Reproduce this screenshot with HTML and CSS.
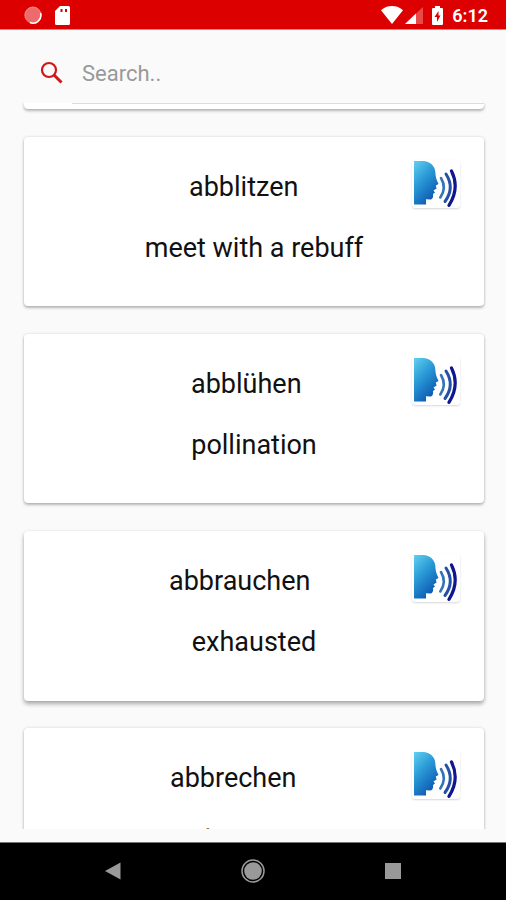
FILE: index.html
```html
<!DOCTYPE html>
<html lang="en">
<head>
    <meta charset="UTF-8">
    <meta name="viewport" content="width=device-width, initial-scale=1.0">
    <title>Dictionary</title>
    <link rel="stylesheet" href="styles.css">
</head>
<body>
    <svg class="defs" width="0" height="0">
        <defs>
            <linearGradient id="face" x1="0" y1="0" x2="0.6" y2="1">
                <stop offset="0" stop-color="#62d0ee"/>
                <stop offset="0.45" stop-color="#2b9bd8"/>
                <stop offset="1" stop-color="#0b57b0"/>
            </linearGradient>
            <symbol id="speak" viewBox="0 0 48 48">
                <path d="M2 1H11C18 1 23 6 23.300 12C23.500 16 24 19 26.500 24L23.800 25.600L24.600 28.600L21.500 30.500L23 32.500L21 34C21.500 38 20 39.600 18 39.500L14 39.200V44.500H2Z" fill="url(#face)"/>
                <g fill="none" stroke-linecap="round">
                    <path d="M29 18Q35 28 28.300 37.500" stroke="#3573b8" stroke-width="2.600"/>
                    <path d="M34 14Q43 28 33 41.500" stroke="#2450a8" stroke-width="3"/>
                    <path d="M39.500 11Q48 28 37 45.300" stroke="#10168c" stroke-width="3.200"/>
                </g>
            </symbol>
        </defs>
    </svg>

    <div class="status-bar">
        <div class="status-left">
            <svg width="18" height="18" viewBox="0 0 18 18">
                <circle cx="9" cy="9" r="8.200" fill="#ee6b6b"/>
                <path d="M16.600 7A8 8 0 0 1 6 16.600" fill="none" stroke="#fff" stroke-width="1.600"/>
                <path d="M6 16.600A8 8 0 1 1 16.600 7" fill="none" stroke="#f08a8a" stroke-width="1"/>
            </svg>
            <svg width="15" height="19" viewBox="0 0 15 19">
                <path d="M5 0H13.500Q15 0 15 1.500V17.500Q15 19 13.500 19H1.500Q0 19 0 17.500V5Z" fill="#fff"/>
                <path d="M5.500 3H7.500V6H5.500ZM10 3H12V6H10Z" fill="#dd0000"/>
            </svg>
        </div>
        <div class="status-right">
            <svg class="wifi" width="22" height="18" viewBox="0 0 22 18">
                <path d="M11 18L0 4.300Q4.500 0 11 0T22 4.300Z" fill="#fff"/>
            </svg>
            <svg class="signal" width="18" height="17" viewBox="0 0 18 17">
                <path d="M0 17L18 0V17Z" fill="#e84a4a"/>
                <path d="M0 17L11 6.500V17Z" fill="#fff"/>
            </svg>
            <svg class="battery" width="11" height="19" viewBox="0 0 11 19">
                <path d="M3 0H8V2H10Q11 2 11 3V18Q11 19 10 19H1Q0 19 0 18V3Q0 2 1 2H3Z" fill="#fff"/>
                <path d="M6.500 5L2.500 11H5V16L8.500 9.500H6.500Z" fill="#dd0000"/>
            </svg>
            <span class="clock">6:12</span>
        </div>
    </div>

    <div class="search">
        <svg width="24" height="24" viewBox="0 0 24 24">
            <circle cx="9" cy="9" r="7" fill="none" stroke="#d01818" stroke-width="2.200"/>
            <path d="M14 14L21.500 21.500" stroke="#d01818" stroke-width="3"/>
        </svg>
        <span class="search-text">Search..</span>
    </div>

    <div class="list">
        <div class="card-prev"></div>
        <div class="card">
            <div class="word blitzen">abblitzen</div>
            <div class="meaning">meet with a rebuff</div>
            <svg class="speak"><use href="#speak"/></svg>
        </div>
        <div class="card">
            <div class="word bluehen">abblühen</div>
            <div class="meaning">pollination</div>
            <svg class="speak"><use href="#speak"/></svg>
        </div>
        <div class="card raised">
            <div class="word brauchen">abbrauchen</div>
            <div class="meaning">exhausted</div>
            <svg class="speak"><use href="#speak"/></svg>
        </div>
        <div class="card">
            <div class="word brechen">abbrechen</div>
            <div class="meaning abort">abort</div>
            <svg class="speak"><use href="#speak"/></svg>
        </div>
    </div>

    <div class="nav-bar">
        <svg width="16" height="18" viewBox="0 0 16 18">
            <path d="M0 9L15.500 0.500V17.500Z" fill="#999"/>
        </svg>
        <svg width="24" height="24" viewBox="0 0 24 24">
            <circle cx="12" cy="12" r="11" fill="none" stroke="#999" stroke-width="1.500"/>
            <circle cx="12" cy="12" r="8.800" fill="#999"/>
        </svg>
        <svg width="16" height="16" viewBox="0 0 16 16">
            <rect width="16" height="16" fill="#999"/>
        </svg>
    </div>
</body>
</html>
```
FILE: styles.css
```css
* {
    box-sizing: border-box;
}

body {
    margin: 0;
    height: 900px;
    display: flex;
    flex-direction: column;
    overflow: hidden;
    background: #fafafa;
    font-family: Roboto, sans-serif;
    color: #111;
}

svg {
    display: block;
    flex: none;
}

.defs {
    position: absolute;
}

.status-bar {
    height: 30px;
    flex: none;
    display: flex;
    justify-content: space-between;
    padding: 0 18px 0 24px;
    background: #dd0000;
    border-bottom: 1px solid #f08080;
}

.status-left,
.status-right {
    display: flex;
    align-items: center;
    padding-top: 1px;
}

.status-left {
    gap: 13px;
}

.wifi {
    margin-right: 2px;
}

.signal {
    margin-right: 9px;
}

.battery {
    margin-right: 9px;
}

.clock {
    font-size: 18px;
    font-weight: 600;
    line-height: 20px;
    color: #fff;
    padding-top: 2px;
}

.search {
    height: 73px;
    flex: none;
    display: flex;
    align-items: center;
    gap: 18px;
    padding: 13px 0 0 40px;
}

.search-text {
    font-size: 22px;
    line-height: 28px;
    padding-top: 2px;
    color: #999;
}

.list {
    height: 726px;
    flex: none;
    overflow: hidden;
    padding: 0 22px 0 24px;
    display: flex;
    flex-direction: column;
    gap: 27.500px;
}

.card,
.card-prev {
    flex: none;
    background: #fff;
    border-radius: 4px;
    box-shadow: 0 2px 3px rgba(0, 0, 0, 0.25), 0 0 3px rgba(0, 0, 0, 0.14);
}

.card {
    position: relative;
    height: 169.700px;
    padding-top: 34px;
}

/* card scrolled under the search field, with the field's underline on it */
.card-prev {
    height: 6px;
    border-radius: 0 0 4px 4px;
    background: linear-gradient(#fccfcf, #fccfcf) 48px 0 / 100% 1px no-repeat #fff;
}

.raised {
    box-shadow: 0 3px 4px rgba(0, 0, 0, 0.32), 0 0 2px rgba(0, 0, 0, 0.1);
}

.word,
.meaning {
    font-size: 27px;
    line-height: 32px;
    white-space: nowrap;
}

.word {
    margin-bottom: 29px;
}

.meaning {
    text-align: center;
}

.blitzen {
    padding-left: 165px;
}

.bluehen {
    padding-left: 167px;
}

.brauchen {
    padding-left: 145px;
}

.brechen {
    padding-left: 146px;
}

.abort {
    text-align: left;
    padding: 1px 0 0 166px;
    color: #777;
}

.speak {
    position: absolute;
    top: 23px;
    right: 24px;
    width: 48px;
    height: 48px;
    border-radius: 3px;
    box-shadow: 0 1px 2px rgba(0, 0, 0, 0.16);
}

.nav-bar {
    height: 58px;
    flex: none;
    margin-top: auto;
    display: flex;
    align-items: center;
    justify-content: space-between;
    padding: 0 105px 2px 105px;
    background: #000;
    border-top: 1px solid #777;
}
```
